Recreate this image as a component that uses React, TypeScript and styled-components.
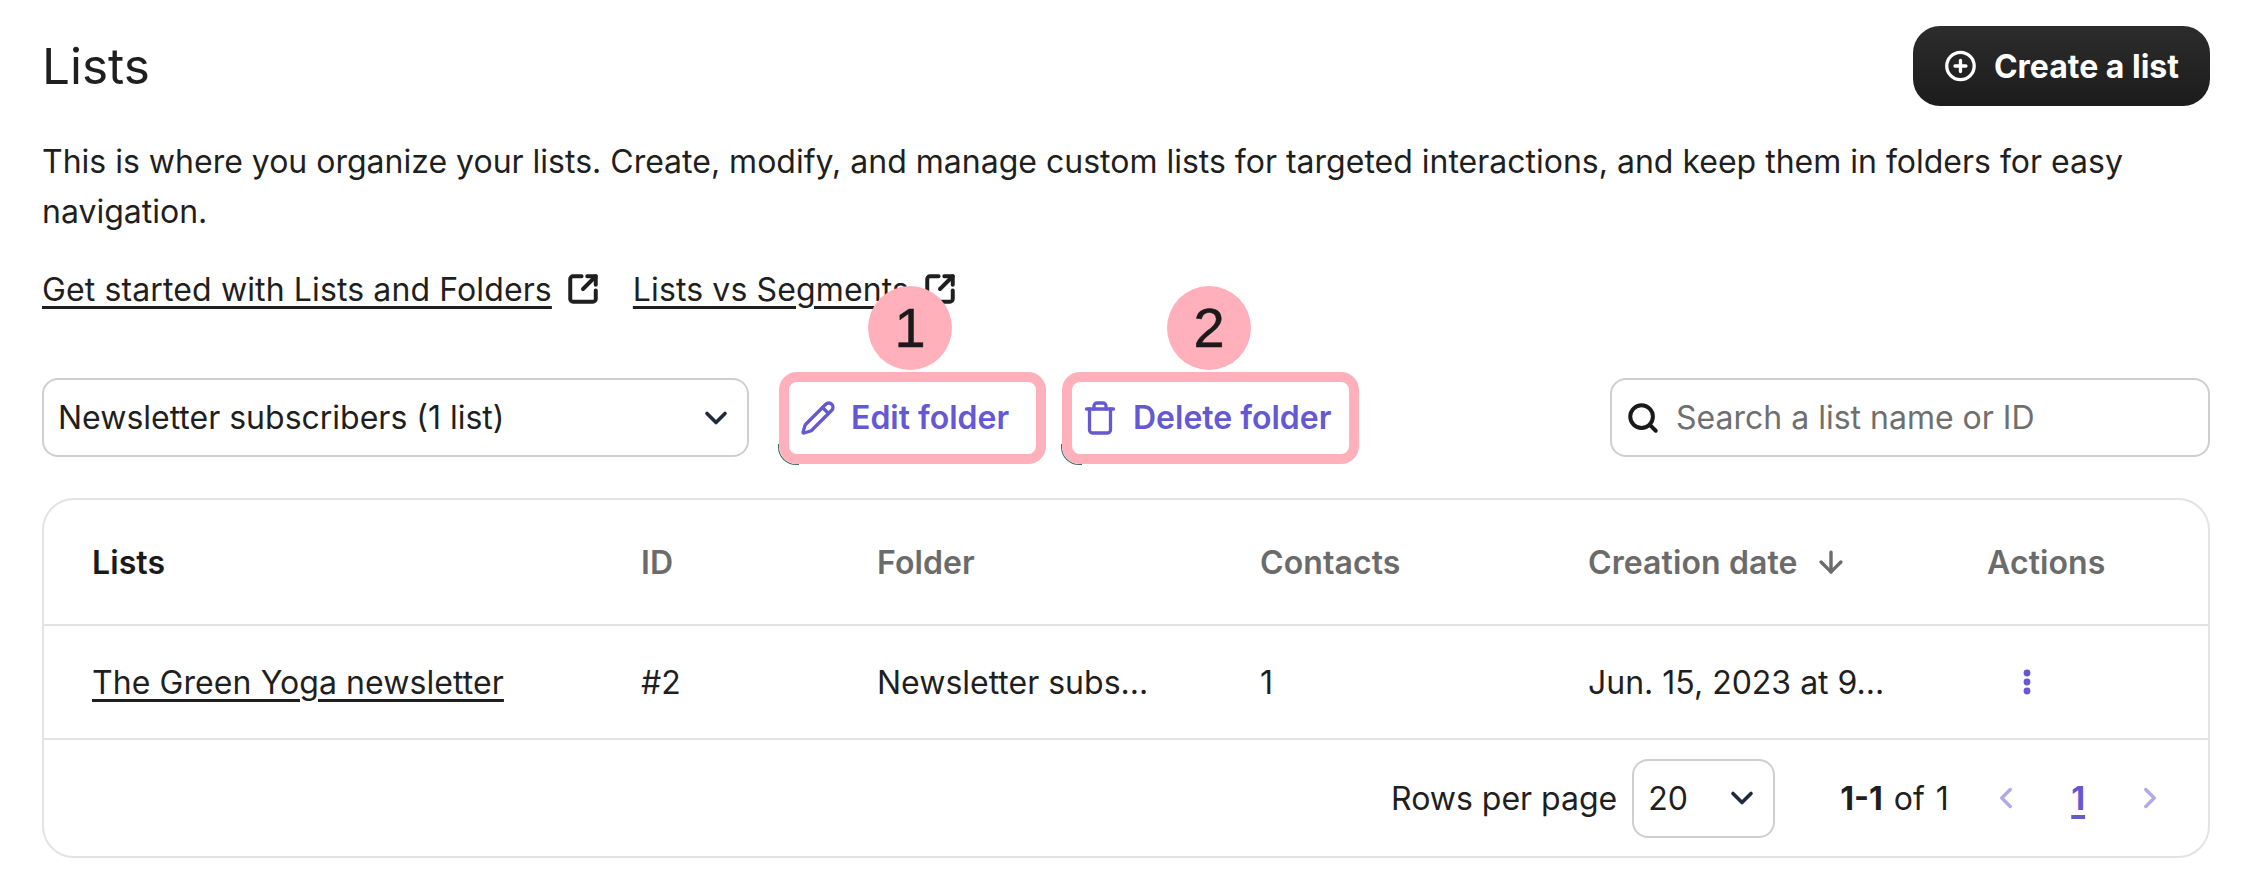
import React from "react";
import styled, { createGlobalStyle } from "styled-components";
import { ArrowDown, ChevronDown, ChevronLeft, ChevronRight, CirclePlus, Pencil, Search, SquareArrowOutUpRight, Trash } from "lucide-react";

const Global = createGlobalStyle`
  html, body { margin: 0; background: #fff; }
  body { font-family: Inter, "Liberation Sans", sans-serif; color: #1f1f1f; -webkit-font-smoothing: antialiased; }
  * { box-sizing: border-box; }
`;

const Page = styled.div`
  width: 2242px;
  height: 880px;
  padding: 26px 32px 0 42px;
  position: relative;
  overflow: hidden;
`;
const Header = styled.header`
  display: flex;
  justify-content: space-between;
  align-items: center;
  height: 80px;
`;
const Title = styled.h1`
  margin: 0;
  font-size: 49.5px;
  font-weight: 400;
`;
const CreateButton = styled.button`
  display: flex;
  align-items: center;
  gap: 17px;
  width: 297px;
  height: 80px;
  padding: 0 31px;
  border: 0;
  border-radius: 27px;
  background: linear-gradient(#2c2c2c, #1c1c1c);
  color: #fff;
  font: 700 32px Inter, sans-serif;
  white-space: nowrap;
`;
const Description = styled.p`
  margin: 31px 0 0;
  font-size: 32px;
  line-height: 50px;
  width: 2120px;
`;
const LinkRow = styled.div`
  display: flex;
  align-items: center;
  margin-top: 27px;
  height: 50px;
`;
const DocLink = styled.a`
  font-size: 32px;
  letter-spacing: 0.12px;
  color: #1f1f1f;
  text-decoration: underline;
  text-decoration-thickness: 3px;
  text-underline-offset: 5px;
`;
const LinkIcon = styled.span`
  display: flex;
  margin: 0 33px 0 14px;
  color: #1f1f1f;
`;
const Controls = styled.div`
  display: flex;
  align-items: center;
  margin-top: 64px;
  height: 79px;
`;
const SelectBox = styled.div<{ $width: number }>`
  display: flex;
  align-items: center;
  justify-content: space-between;
  width: ${(p) => p.$width}px;
  height: 79px;
  padding: 0 13px 0 14px;
  border: 2px solid #cfcfcf;
  border-radius: 16px;
  background: #fff;
  font-size: 32px;
  white-space: nowrap;
  color: #1f1f1f;
  svg { color: #1f2a3c; flex: none; }
`;
const ActionButton = styled.button<{ $width: number; $marginLeft: number; $pad: number }>`
  position: relative;
  display: flex;
  align-items: center;
  gap: 15px;
  width: ${(p) => p.$width}px;
  height: 92px;
  margin-left: ${(p) => p.$marginLeft}px;
  padding: 0 0 0 ${(p) => p.$pad}px;
  border: 0;
  border-radius: 18px;
  background: #fff;
  color: #6558d3;
  font: 600 32px Inter, sans-serif;
  white-space: nowrap;
  &::before {
    content: "";
    position: absolute;
    left: -1px;
    bottom: -1px;
    width: 20px;
    height: 20px;
    border-left: 1px solid #3d6b66;
    border-bottom: 1px solid #3d6b66;
    border-bottom-left-radius: 18px;
  }
`;
const Highlight = styled.span`
  position: absolute;
  inset: 0;
  border: 10px solid #ffb0bb;
  border-radius: 18px;
  pointer-events: none;
`;
const Badge = styled.span<{ $left: number }>`
  position: absolute;
  top: -86px;
  left: ${(p) => p.$left}px;
  width: 84px;
  height: 84px;
  border-radius: 50%;
  background: #ffb0bb;
  color: #1a1a1a;
  display: flex;
  align-items: center;
  justify-content: center;
  font: 400 56px "Liberation Sans", Arial, sans-serif;
  -webkit-text-stroke: 0.5px #1a1a1a;
`;
const SearchBox = styled.div`
  display: flex;
  align-items: center;
  gap: 16px;
  width: 600px;
  height: 79px;
  margin-left: auto;
  padding: 0 14px;
  border: 2px solid #cfcfcf;
  border-radius: 16px;
  color: #6f6f6f;
  font-size: 32px;
  svg { color: #1a1a1a; flex: none; }
`;
const Card = styled.section`
  margin-top: 41px;
  width: 2168px;
  height: 360px;
  border: 2px solid #e3e3e3;
  border-radius: 32px;
`;
const Row = styled.div<{ $height: number; $border?: boolean }>`
  display: grid;
  grid-template-columns: 597px 236px 383px 328px 399px 1fr;
  height: ${(p) => p.$height}px;
  align-items: center;
  ${(p) => (p.$border ? "border-bottom: 2px solid #e3e3e3;" : "")}
`;
const HeadCell = styled.div<{ $dark?: boolean }>`
  display: flex;
  align-items: center;
  gap: 16px;
  font-size: 32px;
  font-weight: 600;
  letter-spacing: 0.1px;
  color: ${(p) => (p.$dark ? "#1a1a1a" : "#6b6b6b")};
  &:first-child { padding-left: 48px; }
`;
const Cell = styled.div`
  font-size: 32px;
  white-space: nowrap;
  &:first-child { padding-left: 48px; }
`;
const RowLink = styled.a`
  color: #1f1f1f;
  letter-spacing: 0.08px;
  text-decoration: underline;
  text-decoration-thickness: 3px;
  text-underline-offset: 5px;
`;
const Kebab = styled.svg`
  display: block;
  margin-left: 35px;
  color: #6558d3;
`;
const Footer = styled.div`
  display: flex;
  align-items: center;
  height: 116px;
  padding-left: 1347px;
  font-size: 32px;
`;
const RowsLabel = styled.span`
  margin-right: 15px;
  white-space: nowrap;
`;
const Range = styled.span`
  margin-left: 65px;
  width: 122px;
  white-space: nowrap;
  word-spacing: 2px;
  b { font-weight: 700; }
`;
const PageNav = styled.span<{ $margin: number }>`
  display: flex;
  color: #b0aae8;
  margin-left: ${(p) => p.$margin}px;
`;
const PageNumber = styled.a`
  margin-left: 48px;
  color: #6558d3;
  font-weight: 700;
  text-decoration: underline;
  text-decoration-thickness: 4px;
  text-underline-offset: 5px;
`;

const ext = <SquareArrowOutUpRight size={34} strokeWidth={2.8} />;
const chevron = <ChevronDown size={36} strokeWidth={2.4} />;

export default function App() {
  return (
    <Page>
      <Global />
      <Header>
        <Title>Lists</Title>
        <CreateButton><CirclePlus size={34} strokeWidth={2.4} />Create a list</CreateButton>
      </Header>
      <Description>
        This is where you organize your lists. Create, modify, and manage custom lists for targeted interactions, and keep them in folders for easy navigation.
      </Description>
      <LinkRow>
        <DocLink>Get started with Lists and Folders</DocLink>
        <LinkIcon>{ext}</LinkIcon>
        <DocLink>Lists vs Segments</DocLink>
        <LinkIcon>{ext}</LinkIcon>
      </LinkRow>
      <Controls>
        <SelectBox $width={707}>Newsletter subscribers (1 list){chevron}</SelectBox>
        <ActionButton $width={267} $marginLeft={30} $pad={21}>
          <Pencil size={36} strokeWidth={2.2} />Edit folder
          <Highlight />
          <Badge $left={89}>1</Badge>
        </ActionButton>
        <ActionButton $width={297} $marginLeft={16} $pad={20}>
          <Trash size={36} strokeWidth={2.2} />Delete folder
          <Highlight />
          <Badge $left={105}>2</Badge>
        </ActionButton>
        <SearchBox><Search size={34} strokeWidth={2.8} />Search a list name or ID</SearchBox>
      </Controls>
      <Card>
        <Row $height={126} $border>
          <HeadCell $dark>Lists</HeadCell>
          <HeadCell>ID</HeadCell>
          <HeadCell>Folder</HeadCell>
          <HeadCell>Contacts</HeadCell>
          <HeadCell>Creation date <ArrowDown size={34} strokeWidth={2.4} /></HeadCell>
          <HeadCell>Actions</HeadCell>
        </Row>
        <Row $height={114} $border>
          <Cell><RowLink>The Green Yoga newsletter</RowLink></Cell>
          <Cell>#2</Cell>
          <Cell>Newsletter subs...</Cell>
          <Cell>1</Cell>
          <Cell>Jun. 15, 2023 at 9...</Cell>
          <Cell>
            <Kebab width="10" height="28" viewBox="0 0 10 28" fill="currentColor">
              <circle cx="5" cy="5" r="3.4" />
              <circle cx="5" cy="14" r="3.4" />
              <circle cx="5" cy="23" r="3.4" />
            </Kebab>
          </Cell>
        </Row>
        <Footer>
          <RowsLabel>Rows per page</RowsLabel>
          <SelectBox $width={143}>20{chevron}</SelectBox>
          <Range><b>1-1</b> of 1</Range>
          <PageNav $margin={27}><ChevronLeft size={34} strokeWidth={2.4} /></PageNav>
          <PageNumber>1</PageNumber>
          <PageNav $margin={48}><ChevronRight size={34} strokeWidth={2.4} /></PageNav>
        </Footer>
      </Card>
    </Page>
  );
}
